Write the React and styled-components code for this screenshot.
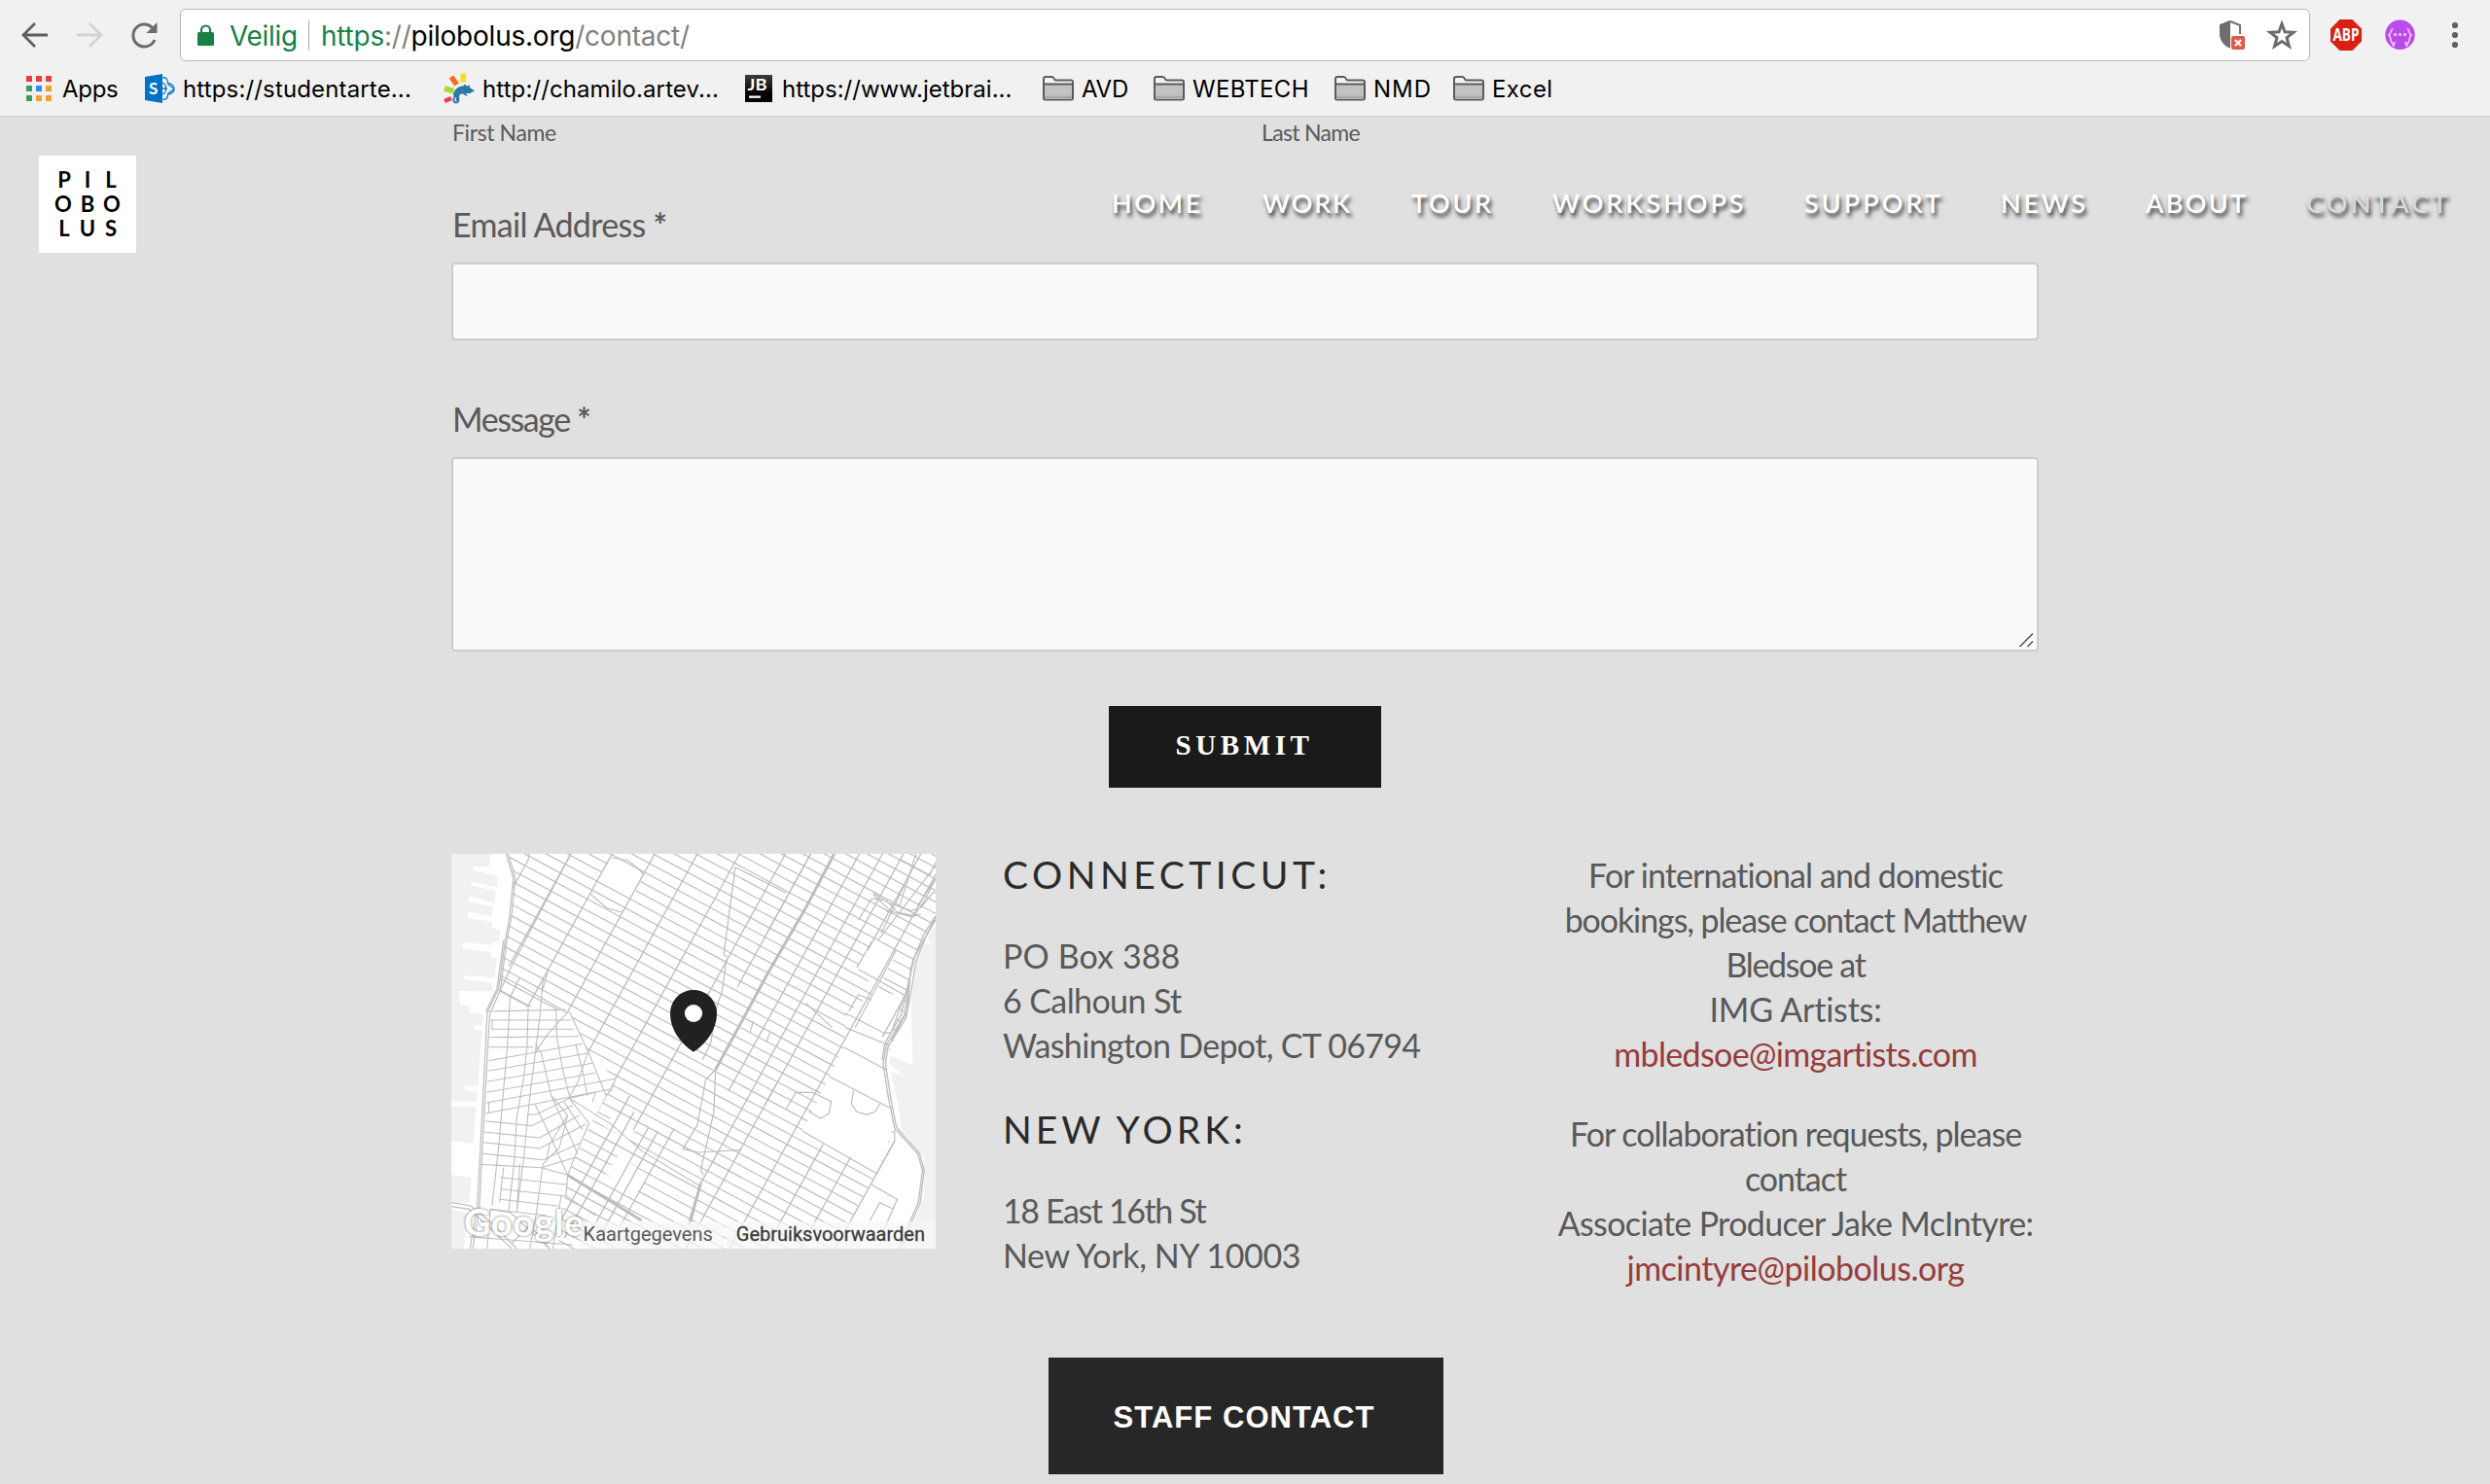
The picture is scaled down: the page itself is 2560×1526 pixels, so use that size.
import React from 'react';
import styled, { createGlobalStyle } from 'styled-components';

const GlobalStyle = createGlobalStyle`
  * { box-sizing: border-box; }
  html, body { margin: 0; padding: 0; background: #e0e0e0; }
  body { overflow: hidden; }
`;

const ui = `Inter, Roboto, sans-serif`;
const brand = `Lato, "Open Sans", sans-serif`;

/* ---------- browser chrome ---------- */

const Screen = styled.div`
  width: 2560px;
  height: 1526px;
  overflow: hidden;
  display: flex;
  flex-direction: column;
  background: #e0e0e0;
`;

const Chrome = styled.header`
  flex: none;
  height: 120px;
  background: #f1f1f1;
  border-bottom: 1px solid #cdcdcd;
  font-family: ${ui};
`;

const Toolbar = styled.div`
  height: 72px;
  display: flex;
  align-items: center;
  padding: 0 33px 0 22px;
`;

const NavButtons = styled.div`
  display: flex;
  gap: 28px;
  width: 163px;
`;

const Glyph = styled.svg`
  display: block;
  flex: none;
  width: ${(p) => p.$w || 28}px;
  height: ${(p) => p.$h || p.$w || 28}px;
  margin-left: ${(p) => p.$ml || 0}px;
  overflow: visible;
`;

const AddressBar = styled.div`
  width: 2190px;
  height: 54px;
  display: flex;
  align-items: center;
  padding: 0 13px 0 17px;
  background: #fff;
  border: 1px solid #b6b6b6;
  border-radius: 6px;
  font-size: 28px;
  line-height: 34px;
`;

const Secure = styled.span`
  color: #188045;
  margin-left: 16px;
  padding-top: 2px;
  width: 81px;
  letter-spacing: -0.3px;
`;

const Divider = styled.span`
  width: 1px;
  height: 31px;
  background: #adadad;
`;

const Url = styled.span`
  flex: 1;
  margin-left: 12px;
  padding-top: 2px;
  color: #808080;
  letter-spacing: -0.23px;
`;

const UrlPart = styled.span`
  color: ${(p) => (p.$scheme ? '#188045' : '#000')};
`;

const Bookmarks = styled.nav`
  height: 40px;
  margin-top: -1px;
  padding-left: 27px;
  display: grid;
  grid-template-columns: 122px 307px 310px 306px 114px 186px 122px 140px;
  align-items: center;
`;

const Bookmark = styled.a`
  display: flex;
  align-items: center;
  gap: ${(p) => p.$gap || 8}px;
  font-size: 24px;
  line-height: 30px;
  letter-spacing: ${(p) => p.$ls || 0}px;
  color: #000;
  white-space: nowrap;
`;

const BookmarkText = styled.span`
  padding-top: 2px;
`;

/* ---------- site header ---------- */

const Page = styled.main`
  position: relative;
  flex: 1;
  font-family: ${brand};
  color: #595959;
`;

const SiteHeader = styled.div`
  position: absolute;
  top: 40px;
  left: 0;
  right: 0;
  padding: 0 40px;
  display: flex;
  justify-content: space-between;
`;

const Logo = styled.div`
  width: 100px;
  height: 100px;
  padding: 12px 15px 13px 14px;
  background: #fff;
  display: grid;
  grid-template-rows: repeat(3, 25px);
`;

const LogoRow = styled.div`
  display: grid;
  grid-template-columns: ${(p) => p.$cols};
  text-align: center;
  font-weight: 700;
  font-size: 22px;
  line-height: 25px;
  color: #000;
`;

const SiteNav = styled.nav`
  display: grid;
  grid-template-columns: 155px 153px 145px 259px 202px 149px 165px 149px;
  padding-top: 32px;
`;

const SiteLink = styled.a`
  font-size: 27px;
  font-weight: 600;
  line-height: 33px;
  letter-spacing: ${(p) => p.$ls}px;
  white-space: nowrap;
  color: ${(p) => (p.$active ? '#d9d9d9' : '#fff')};
  text-shadow: 2px 4px 4px rgba(0, 0, 0, 0.75);
`;

/* ---------- form ---------- */

const Content = styled.div`
  width: 1632px;
  margin: 0 auto;
  display: flex;
  flex-direction: column;
`;

const NameCaptions = styled.div`
  display: grid;
  grid-template-columns: 832px 1fr;
  padding: 2px 0 0 1px;
  height: 88px;
`;

const Caption = styled.span`
  font-size: 23px;
  line-height: 28px;
  letter-spacing: ${(p) => p.$ls}px;
`;

const Field = styled.label`
  position: relative;
  display: flex;
  flex-direction: column;
  gap: 16px;
  margin-bottom: ${(p) => p.$after}px;
`;

const FieldLabel = styled.span`
  padding-left: 1px;
  font-size: 34px;
  line-height: 46px;
  letter-spacing: ${(p) => p.$ls}px;
`;

const Star = styled.span`
  font-weight: 700;
`;

const box = `
  display: block;
  width: 1632px;
  margin: 0;
  background: #fafafa;
  border: 2px solid #ccc;
  border-radius: 4px;
  outline: none;
  resize: none;
`;
const Input = styled.input`${box} height: 80px;`;
const TextArea = styled.textarea`${box} height: 200px;`;

const Grip = styled.svg`
  position: absolute;
  right: 5px;
  bottom: 4px;
  width: 16px;
  height: 16px;
`;

const Submit = styled.button`
  align-self: center;
  width: 280px;
  height: 84px;
  margin: 0 0 68px;
  padding: 0 1px 5px 0;
  border: 0;
  background: #1a1a1a;
  color: #fff;
  font: 700 29px/36px "Liberation Serif", serif;
  letter-spacing: 4.6px;
`;

/* ---------- contact columns ---------- */

const Columns = styled.section`
  display: grid;
  grid-template-columns: repeat(3, 500px);
  column-gap: 66px;
  height: 518px;
`;

const Addresses = styled.div`
  padding-left: 1px;
`;

const Heading = styled.h2`
  margin: 0 0 40px;
  font-size: 39px;
  font-weight: 400;
  line-height: 42px;
  letter-spacing: ${(p) => p.$ls}px;
  color: #2b2b2b;
`;

const Paragraph = styled.p`
  margin: 0 0 ${(p) => p.$after || 0}px;
`;

const Line = styled.span`
  display: block;
  font-size: 34px;
  line-height: 46px;
  letter-spacing: ${(p) => p.$ls}px;
  white-space: nowrap;
`;

const MailLink = styled(Line).attrs({ as: 'a' })`
  color: #963c3c;
`;

const Bookings = styled.div`
  margin-top: -1px;
  text-align: center;
`;

const StaffButton = styled.a`
  align-self: center;
  width: 406px;
  height: 120px;
  margin-left: 2px;
  padding: 3px 4px 0 0;
  display: flex;
  align-items: center;
  justify-content: center;
  background: #272727;
  color: #fff;
  font: 700 31px/36px "Liberation Sans", Arial, sans-serif;
  letter-spacing: 1.04px;
`;

/* ---------- map ---------- */

const MapBox = styled.div`
  position: relative;
  width: 498px;
  height: 406px;
  overflow: hidden;
  background: #fff;
`;

const MapSvg = styled.svg`
  display: block;
  width: 498px;
  height: 406px;
`;

const GoogleMark = styled.span`
  position: absolute;
  left: 13px;
  bottom: 3px;
  font: 700 38px/50px ${brand};
  letter-spacing: 0.5px;
  color: #fff;
  text-shadow: 0 0 3px rgba(0, 0, 0, 0.4), 0 0 2px rgba(0, 0, 0, 0.25);
`;

const MapCredits = styled.div`
  position: absolute;
  right: 0;
  bottom: 0;
  height: 28px;
  display: flex;
  gap: 2px;
  font: 20px/27px Roboto, sans-serif;
`;

const Credit = styled.span`
  padding: 0 11px 0 ${(p) => (p.$dark ? 11 : 3)}px;
  background: rgba(247, 247, 247, 0.75);
  color: ${(p) => (p.$dark ? '#3c3c3c' : '#5a5a5a')};
  -webkit-text-stroke: ${(p) => (p.$dark ? '0.3px #3c3c3c' : '0')};
`;

const SLOPE = 0.544;
const avenue = (x0, y1, y2) =>
  `M${x0 - SLOPE * (y1 - 54)} ${y1}L${x0 - SLOPE * (y2 - 54)} ${y2}`;

const AVENUES = [
  [405, 54, 400], [530, 54, 525], [660, 54, 540], [790, 54, 670], [918, 54, 1115],
  [1058, 54, 905], [1135, 54, 465], [1283, 54, 785], [1353, 54, 1070], [1417, 54, 1272],
  [1470, 54, 350], [1550, 118, 1272], [1660, 240, 620], [1660, 950, 1272], [1765, 990, 1272],
  [1872, 940, 1272], [990, 800, 1240], [1030, 850, 1240], [1100, 900, 1240], [1135, 910, 1240], [1180, 900, 1200],
].map((a) => avenue(...a)).join('');

const STREETS = Array.from({ length: 54 }, (_, k) => {
  const c = -800 + 35.5 * k;
  return `M150 ${c + 0.545 * 150}L1515 ${c + 0.545 * 1515}`;
}).join('');

const VILLAGE = `
M220 495 212 640 200 780 185 960 165 1140M275 525 272 640 262 740 240 870 232 1010 215 1160
M320 440 310 560 297 665 285 760 270 900 262 990 240 1160M150 540 390 535M160 567 405 567
M165 567 165 595 412 595M155 620 430 617M155 650 290 650M155 692 440 640M152 724 460 668
M150 757 470 700M148 790 480 730M147 822 540 748M145 855 525 780M155 822 155 852
M360 535 362 620 380 720 400 800M400 540 460 670 512 800M397 540 335 610 297 665
M297 640 315 670 345 800 400 920 425 980M420 645 440 720 455 800M455 670 425 760 400 805
M295 825 340 920 395 1045M270 858 300 858 400 808M143 878 285 893 410 830M140 912 310 930 430 860
M138 944 310 963 450 888M132 978 320 998 435 945M128 1012 315 1022 420 990M315 1022 395 1045
M200 1022 188 1130M190 1052 395 1075M190 1088 390 1110M188 1120 365 1140M160 1150 330 1170
M400 808 460 885 420 980 395 1045M400 808 530 890 620 970 800 1080M400 808 480 790 470 820
M345 800 395 860 370 960 320 1010 300 1160 280 1272M395 860 340 950 330 1000M385 820 440 905
M395 1045 390 1110 480 1170M250 1010 240 1160M95 1235 410 1260M160 1150 150 1272
M225 1255 280 1200 340 1272M375 1110 350 1272M512 800 530 780 540 748`;

const DETAILS = `
M278 54 275 72 228 160M405 54 225 400 190 475M190 430 250 460 395 545M185 475 275 525M250 435 222 492M335 415 320 470
M530 66 580 75 610 100 628 120M465 178 515 222 562 234
M905 95 870 365M870 365 880 372M905 95 1060 175M878 380 865 480 850 520 830 640 805 690M815 750 845 720 840 850 800 1030 808 1045
M815 750 790 890 745 965M745 965 795 975 925 967M800 1070 765 1185M1135 54 1000 300
M1320 325 1275 405M1250 540 1280 488 1320 505M1120 515 1200 590M1280 410 1420 490M1420 490 1380 605 1360 608 1240 545
M1240 590 1375 645M1235 650 1365 720M1190 740 1375 838M1265 785 1258 825 1275 850 1305 858 1330 850 1345 825
M1090 790 1140 790 1197 818 1190 855 1165 870 1130 850M1060 840 1090 790M1395 350 1270 590
M1110 910 1335 1040M1320 1075 1398 1120 1385 1150M1315 1185 1345 1130 1385 1150 1355 1220M1390 905 1390 940 1335 1040
M1325 175 1370 205 1440 230 1470 220 1505 175 1515 172M1320 192 1280 258M1320 192 1365 198 1400 235 1450 245 1480 200 1515 130
M1325 180 1380 232 1440 248 1470 240M1385 232 1365 232M1455 54 1405 215M1515 80 1497 120 1405 70M1420 150 1350 298
M1515 90 1340 320M995 830 1030 765M960 570 950 605M1010 605 1000 635`;

const HIGHWAY_WEST = `
M208 54 230 130 218 250 205 320 185 470 150 545 145 650 130 950 120 1140 98 1272
M214 54 236 130 224 250 210 320 190 475 158 550 152 650 136 950 126 1150 106 1272
M200 320 180 470 147 540M41 1130 100 1140 160 1190 240 1272M41 1142 95 1150 150 1200 225 1272M160 1152 220 1160 340 1272`;

const HIGHWAY_EAST = `
M1515 130 1460 215M1515 245 1480 300 1445 385 1430 480 1420 550 1365 645 1355 700 1370 800 1390 900 1460 980 1475 1030 1462 1130 1400 1272
M1515 258 1485 310 1455 385 1440 480 1425 560 1370 650 1362 700 1377 800 1395 895 1466 978 1480 1030 1468 1130 1408 1272
M1515 250 1450 375 1425 480 1410 550 1360 640 1352 690M1440 400 1428 540 1380 630`;

const WEST_WATER = `M41 54H162L155 93 108 93 108 105 182 122 180 157 103 140 101 152 176 168 173 207 97 184 95 203 168 216 165 248 92 232 90 252 165 263
165 283 190 288 187 325 168 326 162 335 78 326 75 345 163 358 163 375 180 376 172 436 78 430 78 440 165 452 167 478 100 478 64 476 68 520 97 522 97 545 138 548 136 583 110 583 110 597 134 598 122 770 82 770 82 785 120 788 117 818 41 816Z
M41 833 116 835 108 948 41 940ZM41 1045 102 1052 96 1132 41 1128ZM41 1150 95 1165 78 1272 41 1272Z`;
const EAST_WATER = `M1515 275 1490 315 1505 330 1480 330 1455 390 1440 520 1445 705 1378 678 1372 700 1417 738 1378 725 1400 825 1412 905 1480 990 1480 1110 1445 1200 1408 1272H1515Z`;

const OPEN_SPACE = `M522 78 624 124 596 180 492 124ZM1322 325 1395 362 1335 475 1275 405ZM1330 480 1420 492 1380 606 1245 545Z
M1245 545 1380 606 1365 722 1235 650ZM1235 650 1365 720 1385 900 1335 1040 1110 910ZM1390 905 1470 990 1440 1180 1395 1272 1205 1272 1335 1040Z
M550 985 640 1045 605 1100 510 1040ZM530 865 600 905 582 940 505 895Z`;

function CityMap() {
  return (
    <MapBox>
      <MapSvg viewBox="41 54 1474 1218" preserveAspectRatio="none" fill="none" stroke="#bdbdbd" strokeWidth="3.6">
        <defs>
          <clipPath id="uptown">
            <path d="M215 54 232 130 222 250 205 330 190 420 185 475 275 525 397 540 460 670 540 748 512 800 450 920 395 1045 385 1115 365 1272H1420L1470 1000 1390 900 1360 700 1420 550 1450 380 1515 240V54Z" />
          </clipPath>
        </defs>
        <g stroke="none" fill="#f1f1f1">
          <path d={WEST_WATER} />
          <path d={EAST_WATER} />
        </g>
        <g clipPath="url(#uptown)">
          <path d={STREETS} />
          <path d={OPEN_SPACE} fill="#fff" stroke="none" />
          <path d={AVENUES} strokeWidth="4" />
        </g>
        <path d="M1872 940 1695 1272" />
        <path d={VILLAGE} strokeWidth="3.2" />
        <path d={DETAILS} />
        <path d={HIGHWAY_WEST} />
        <path d={HIGHWAY_EAST} strokeWidth="4" />
        <path d="M1206 54 1120 220 1000 430 845 720M395 1045 620 1185M800 1070 765 1200" strokeWidth="9" />
        <path
          d="M778 474C738 474 707 506 707 547C707 600 745 645 778 665C811 645 849 600 849 547C849 506 818 474 778 474Z"
          fill="#212121" stroke="none"
        />
        <circle cx="778" cy="546" r="27" fill="#fff" stroke="none" />
      </MapSvg>
      <GoogleMark>Google</GoogleMark>
      <MapCredits>
        <Credit>Kaartgegevens</Credit>
        <Credit $dark>Gebruiksvoorwaarden</Credit>
      </MapCredits>
    </MapBox>
  );
}

/* ---------- icons ---------- */

const ArrowIcon = ({ color, flip }) => (
  <Glyph viewBox="0 0 28 28" fill="none" stroke={color} strokeWidth="2.8">
    <path d={flip ? 'M1 14H26M14 2 26 14 14 26' : 'M27 14H2M14 2 2 14 14 26'} />
  </Glyph>
);

const ReloadIcon = () => (
  <Glyph viewBox="0 0 28 28">
    <path d="M22.6 6.4A11.5 11.5 0 1 0 25 19" fill="none" stroke="#6b6b6b" strokeWidth="3" />
    <path d="M27.5 1V12H16.5Z" fill="#6b6b6b" />
  </Glyph>
);

const LockIcon = () => (
  <Glyph $w={17} $h={22} viewBox="0 0 17 22">
    <rect y="8" width="17" height="14" rx="1.5" fill="#188045" />
    <path d="M4 9V6a4.5 4.5 0 0 1 9 0V9" fill="none" stroke="#188045" strokeWidth="2.2" />
  </Glyph>
);

const ShieldIcon = () => (
  <Glyph $w={26} $h={30} viewBox="0 0 26 30">
    <path d="M11 1 21 5V14M11 1 1 5V13C1 19.5 4.500 25 11 27.500" fill="none" stroke="#737373" strokeWidth="2" />
    <path d="M11 0 0 4.500V12C0 19.500 4 25.500 11 28Z" fill="#6e6e6e" />
    <rect x="12" y="16" width="14" height="14" rx="2" fill="#e25b4a" />
    <path d="M16 20 22 26M22 20 16 26" stroke="#fff" strokeWidth="2.200" />
  </Glyph>
);

const StarIcon = () => (
  <Glyph $w={30} viewBox="0 0 30 30" $ml={23}>
    <path
      d="M15 3.500 18 11.700 27 12.200 20 17.700 22.500 26.500 15 21.500 7.500 26.500 10 17.700 3 12.200 12 11.700Z"
      fill="none" stroke="#6b6b6b" strokeWidth="3"
    />
  </Glyph>
);

const AbpText = styled.text`
  font: 700 17px "Open Sans", sans-serif;
  fill: #fff;
`;

const AbpIcon = () => (
  <Glyph $w={32} viewBox="0 0 32 32" $ml={21}>
    <path d="M9.500 0H22.500L32 9.500V22.500L22.500 32H9.500L0 22.500V9.500Z" fill="#d92014" />
    <AbpText x="2.500" y="22" textLength="27" lengthAdjust="spacingAndGlyphs">ABP</AbpText>
  </Glyph>
);

const FaceIcon = () => (
  <Glyph $w={31} viewBox="0 0 31 31" $ml={24}>
    <circle cx="15.500" cy="14.800" r="15.200" fill="#b94bea" />
    <g fill="none" stroke="#ecc9fa" strokeWidth="1.700">
      <path d="M8 8C6 10 6.500 13 4 15 6.500 17 5 22 8.500 25M23 8C25 10 24.500 13 27 15 24.500 17 26 22 22.500 25M10 22 8.500 27M21 22 22.500 27" />
      <path d="M9 14.500h3M14 14.500h3M19 14.500h3" strokeWidth="2.400" />
    </g>
  </Glyph>
);

const MenuIcon = () => (
  <Glyph $w={6} $h={28} viewBox="0 0 6 28" $ml={38} fill="#5f5f5f">
    <circle cx="3" cy="4" r="3.100" />
    <circle cx="3" cy="14" r="3.100" />
    <circle cx="3" cy="24" r="3.100" />
  </Glyph>
);

const APP_COLORS = ['#f0393b', '#f0393b', '#f0393b', '#36a05b', '#2a8cf3', '#f0a12b', '#36a05b', '#f0a12b', '#f0a12b'];
const AppsIcon = () => (
  <Glyph $w={26} viewBox="0 0 26 26">
    {APP_COLORS.map((c, i) => (
      <rect key={i} x={(i % 3) * 10} y={Math.floor(i / 3) * 10} width="6" height="6" fill={c} />
    ))}
  </Glyph>
);

const IconText = styled.text`
  font: 700 ${(p) => p.$s}px ${brand};
  fill: #fff;
`;

const SharepointIcon = () => (
  <Glyph $w={31} $h={30} viewBox="0 0 31 30">
    <g fill="none" stroke="#0a77cc" strokeWidth="1.300">
      <path d="M18 4C21 3 24 5 23.500 9.500 28 10 30 13 30 15.500 30 19 27 20.500 23.500 21 24 25 21 27 18 26" />
      <path d="M18 9C23 11 23 19 18 21M18 15H23M23.500 9.500C25 13 28 13 30 15.500M23.500 21C25 18 28 18 30 15.500" />
    </g>
    <path d="M0 3 18 0V30L0 27Z" fill="#0072c6" />
    <IconText $s={17} x="4" y="21">S</IconText>
  </Glyph>
);

const ChamiloIcon = () => (
  <Glyph $w={32} $h={32} viewBox="0 0 32 32">
    <g strokeLinecap="butt" strokeWidth="5.500">
      <path d="M20.300 0.500V9.500" stroke="#f7e017" />
      <path d="M8 4 13.500 12" stroke="#ff6a13" />
      <path d="M1 16 10 18.500" stroke="#a5d82c" />
    </g>
    <path d="M1 29 8 26" stroke="#f03b4a" strokeWidth="4.500" />
    <path
      d="M10 21C12 16 16 13.500 20 13.500L22 11.500 24 13.500 27 12.500 27 15 32 18.500 27 21 23 21 25 24 22 23 20 21.500 17 22 16 24.500C17 28 16 31.500 13 31.500 9.500 31.500 8.500 27.500 10.500 24.500Z"
      fill="#2f78a6"
    />
    <path d="M13 25.500C11.500 26 11.500 29 13.500 29" fill="none" stroke="#f1f1f1" strokeWidth="1.300" />
  </Glyph>
);

const JetbrainsIcon = () => (
  <Glyph $w={28} viewBox="0 0 28 28">
    <defs>
      <linearGradient id="jb" x2="0" y2="1">
        <stop offset="0" stopColor="#3d3d3d" />
        <stop offset="0.700" stopColor="#000" />
      </linearGradient>
    </defs>
    <rect width="28" height="28" fill="url(#jb)" />
    <IconText $s={17} x="2.500" y="16" textLength="20" lengthAdjust="spacingAndGlyphs">JB</IconText>
    <rect x="4" y="21.500" width="12" height="2.300" fill="#fff" />
  </Glyph>
);

const FolderIcon = () => (
  <Glyph $w={32} $h={26} viewBox="0 0 32 26">
    <path d="M1 23V3Q1 1 3 1H9.500Q11 1 11.800 3 12.300 4.500 14 4.500H29Q31 4.500 31 6.500V23Q31 24.500 29 24.500H3Q1 24.500 1 23Z" fill="#f4f4f4" stroke="#5b5b5b" strokeWidth="2" />
    <path d="M2 9H30V23.500H2Z" fill="#c2c2c2" />
    <path d="M2 20.500H30V23.500H2Z" fill="#aaa" />
    <path d="M1 8.500H31" stroke="#5b5b5b" strokeWidth="2" />
  </Glyph>
);

/* ---------- data ---------- */

const BOOKMARKS = [
  { icon: AppsIcon, text: 'Apps', ls: -0.3, gap: 11 },
  { icon: SharepointIcon, text: 'https://studentarte...', ls: 0.15 },
  { icon: ChamiloIcon, text: 'http://chamilo.artev...', ls: 0.1 },
  { icon: JetbrainsIcon, text: 'https://www.jetbrai...', ls: 0, gap: 10 },
  { icon: FolderIcon, text: 'AVD', ls: -0.3, gap: 8 },
  { icon: FolderIcon, text: 'WEBTECH', ls: 0.3, gap: 8 },
  { icon: FolderIcon, text: 'NMD', ls: 1, gap: 8 },
  { icon: FolderIcon, text: 'Excel', ls: 0.4, gap: 8 },
];

const LINKS = [
  ['HOME', 2.7], ['WORK', 1.8], ['TOUR', 2.7], ['WORKSHOPS', 2.9],
  ['SUPPORT', 3], ['NEWS', 2.7], ['ABOUT', 2.3], ['CONTACT', 3.2, true],
];

const LOGO = [
  { letters: 'PIL', cols: '24px 24px 24px' },
  { letters: 'OBO', cols: '22px 28px 22px' },
  { letters: 'LUS', cols: '24px 24px 24px' },
];

export default function App() {
  return (
    <Screen>
      <GlobalStyle />
      <Chrome>
        <Toolbar>
          <NavButtons>
            <ArrowIcon color="#5f5f5f" />
            <ArrowIcon color="#d3d3d3" flip />
            <ReloadIcon />
          </NavButtons>
          <AddressBar>
            <LockIcon />
            <Secure>Veilig</Secure>
            <Divider />
            <Url>
              <UrlPart $scheme>https</UrlPart>://<UrlPart>pilobolus.org</UrlPart>/contact/
            </Url>
            <ShieldIcon />
            <StarIcon />
          </AddressBar>
          <AbpIcon />
          <FaceIcon />
          <MenuIcon />
        </Toolbar>
        <Bookmarks>
          {BOOKMARKS.map(({ icon: Icon, text, ls, gap }) => (
            <Bookmark key={text} $ls={ls} $gap={gap}>
              <Icon />
              <BookmarkText>{text}</BookmarkText>
            </Bookmark>
          ))}
        </Bookmarks>
      </Chrome>

      <Page>
        <Content>
          <NameCaptions>
            <Caption $ls={-0.38}>First Name</Caption>
            <Caption $ls={-0.67}>Last Name</Caption>
          </NameCaptions>
          <Field $after={58}>
            <FieldLabel $ls={-0.7}>Email Address <Star>*</Star></FieldLabel>
            <Input type="text" />
          </Field>
          <Field $after={56}>
            <FieldLabel $ls={-1.4}>Message <Star>*</Star></FieldLabel>
            <TextArea />
            <Grip viewBox="0 0 16 16" stroke="#5c5c5c" strokeWidth="1.700">
              <path d="M1.500 15 15 1.500M9.500 15 15 9.500" />
            </Grip>
          </Field>
          <Submit>SUBMIT</Submit>
          <Columns>
            <CityMap />
            <Addresses>
              <Heading $ls={4.5}>CONNECTICUT:</Heading>
              <Paragraph $after={42}>
                <Line $ls={0.1}>PO Box 388</Line>
                <Line $ls={-0.6}>6 Calhoun St</Line>
                <Line $ls={-0.68}>Washington Depot, CT 06794</Line>
              </Paragraph>
              <Heading $ls={4}>NEW YORK:</Heading>
              <Paragraph>
                <Line $ls={-1.4}>18 East 16th St</Line>
                <Line $ls={-0.36}>New York, NY 10003</Line>
              </Paragraph>
            </Addresses>
            <Bookings>
              <Paragraph $after={36}>
                <Line $ls={-0.93}>For international and domestic</Line>
                <Line $ls={-1.1}>bookings, please contact Matthew</Line>
                <Line $ls={-1.3}>Bledsoe at</Line>
                <Line $ls={-0.2}>IMG Artists:</Line>
                <MailLink $ls={-0.66}>mbledsoe@imgartists.com</MailLink>
              </Paragraph>
              <Paragraph>
                <Line $ls={-1}>For collaboration requests, please</Line>
                <Line $ls={-1.05}>contact</Line>
                <Line $ls={-0.66}>Associate Producer Jake McIntyre:</Line>
                <MailLink $ls={-0.5}>jmcintyre@pilobolus.org</MailLink>
              </Paragraph>
            </Bookings>
          </Columns>
          <StaffButton>STAFF CONTACT</StaffButton>
        </Content>

        <SiteHeader>
          <Logo>
            {LOGO.map(({ letters, cols }) => (
              <LogoRow key={letters} $cols={cols}>
                {letters.split('').map((ch, i) => <span key={i}>{ch}</span>)}
              </LogoRow>
            ))}
          </Logo>
          <SiteNav>
            {LINKS.map(([text, ls, active]) => (
              <SiteLink key={text} $ls={ls} $active={active}>{text}</SiteLink>
            ))}
          </SiteNav>
        </SiteHeader>
      </Page>
    </Screen>
  );
}
